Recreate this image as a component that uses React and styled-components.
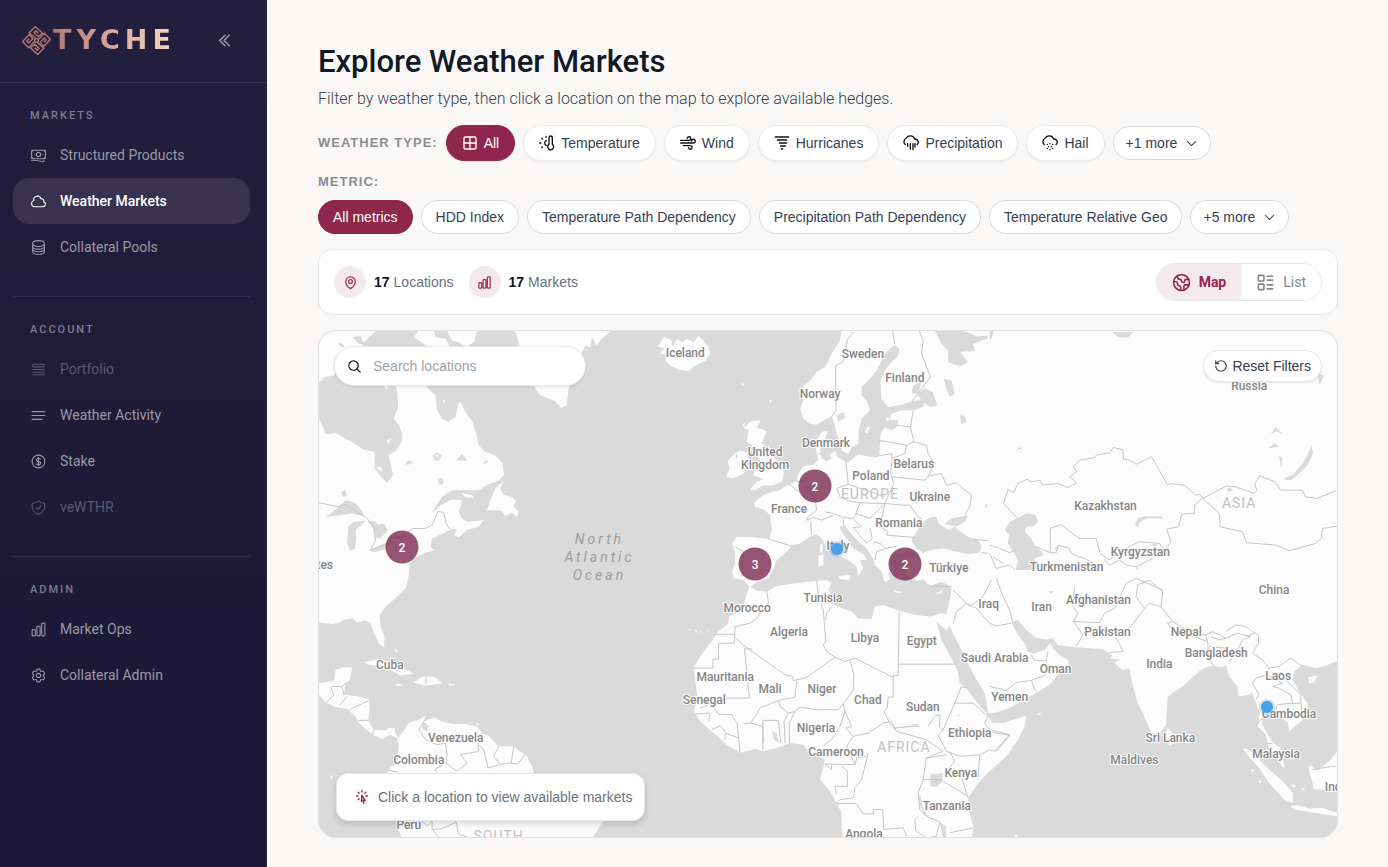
import { useState } from "react"
import styled, { createGlobalStyle, css } from "styled-components"
import {
    HiOutlineBanknotes,
    HiOutlineChartBar,
    HiOutlineChevronDoubleLeft,
    HiOutlineChevronDown,
    HiOutlineCircleStack,
    HiOutlineCloud,
    HiOutlineCog6Tooth,
    HiOutlineCurrencyDollar,
    HiOutlineCursorArrowRays,
    HiOutlineMagnifyingGlass,
    HiOutlineMapPin,
    HiOutlineQueueList,
    HiOutlineShieldCheck,
} from "react-icons/hi2"
import { Earth, Grid2x2, LayoutList, RotateCcw } from "lucide-react"

const GlobalStyle = createGlobalStyle`
    *{
        box-sizing: border-box;
    }

    body{
        margin: 0;
        background-color: #f9f8f7;
        font-family: "Liberation Sans", Arial, sans-serif;
        color: #111827;
    }

    button, input{
        font: inherit;
        color: inherit;
    }

    button{
        cursor: pointer;
    }
`

const Page = styled.div`
    display: flex;
    min-height: 100vh;
`

/* Sidebar */

const Sidebar = styled.aside`
    flex: 0 0 267px;
    background: linear-gradient(180deg, #241e3f 0%, #1f1a38 50%, #1c1637 100%);
    border-right: 1px solid #2b2549;
    font-family: Roboto, sans-serif;
`

const Brand = styled.div`
    display: flex;
    align-items: center;
    justify-content: space-between;
    height: 83px;
    padding: 0 33px 2px 22px;
    border-bottom: 1px solid #332d4f;
`

const Logo = styled.a`
    display: flex;
    align-items: center;
    gap: 2px;
    text-decoration: none;
    font-family: "DejaVu Sans", sans-serif;
    font-size: 27px;
    font-weight: 700;
    line-height: 32px;
    letter-spacing: 5px;

    span{
        color: transparent;
        background: linear-gradient(90deg, #b07a74, #dba99c 50%, #f7d9bd);
        background-clip: text;
    }
`

const CollapseButton = styled.button`
    display: flex;
    padding: 0;
    border: 0;
    background: none;
    color: #a3a1b3;
    font-size: 17px;

    svg{
        stroke-width: 2;
    }
`

const Section = styled.section`
    margin: 0 16px 0 13px;
    padding: 25px 0 26px;

    & + &{
        border-top: 1px solid #332d4d;
    }
`

const SectionTitle = styled.h2`
    margin: 0 0 8px 17px;
    font-size: 11px;
    line-height: 16px;
    font-weight: 500;
    letter-spacing: 2px;
    text-transform: uppercase;
    color: #7f7b91;
`

const NavItem = styled.a`
    display: flex;
    align-items: center;
    gap: 13px;
    height: 46px;
    padding: 0 17px;
    border-radius: 16px;
    font-size: 14px;
    text-decoration: none;
    color: #9a98a6;

    svg{
        width: 17px;
        height: 17px;
    }

    ${({ $muted }) => $muted && css`
        color: #5c586f;
    `}

    ${({ $active }) => $active && css`
        color: #fff;
        font-weight: 500;
        background-color: #39324f;
    `}
`

/* Filters */

const Main = styled.main`
    flex: 1;
    min-width: 0;
    padding: 41px 50px 28px 51px;
`

const Title = styled.h1`
    margin: 0;
    font-family: Roboto, sans-serif;
    font-size: 31px;
    line-height: 42px;
    font-weight: 500;
`

const Subtitle = styled.p`
    margin: 4px 0 14px;
    font-family: Roboto, sans-serif;
    font-size: 16px;
    line-height: 24px;
    font-weight: 300;
    color: #374151;
`

const FilterRow = styled.div`
    display: flex;
    flex-wrap: wrap;
    align-items: center;
    gap: 8px;
`

const FilterLabel = styled.span`
    font-size: 13px;
    line-height: 18px;
    font-weight: 700;
    letter-spacing: 1px;
    color: #8b8d94;
`

const MetricLabel = styled(FilterLabel)`
    display: block;
    margin: 12px 0 9px;
`

const Pill = styled.button`
    display: flex;
    align-items: center;
    gap: 6px;
    height: ${({ $tall }) => ($tall ? 36 : 34)}px;
    padding: 0 ${({ $tall, $more }) => ($tall ? 15 : $more ? 12 : 14)}px;
    border: 1px solid ${({ $tall }) => ($tall ? "#e9eaee" : "#d7dae0")};
    border-radius: 18px;
    background-color: #fff;
    box-shadow: ${({ $tall }) => ($tall ? "0 1px 2px rgba(0, 0, 0, 0.06)" : "none")};
    font-size: 14px;
    white-space: nowrap;
    color: #374151;

    svg{
        width: 16px;
        height: 16px;
        color: #111;
    }

    ${({ $more }) => $more && css`
        gap: 8px;

        svg{
            width: 13px;
            height: 13px;
            stroke-width: 2;
            color: #374151;
        }
    `}

    ${({ $selected }) => $selected && css`
        border-color: #8f264b;
        background-color: #8f264b;
        color: #fff;

        svg{
            color: #fff;
        }
    `}
`

/* Stats */

const StatsCard = styled.div`
    display: flex;
    align-items: center;
    justify-content: space-between;
    margin: 15px 0;
    padding: 13px 15px;
    border: 1px solid #e5e7eb;
    border-radius: 14px;
    background-color: #fff;
`

const Stats = styled.div`
    display: flex;
    gap: 15px;
`

const Stat = styled.div`
    display: flex;
    align-items: center;
    gap: 4px;
    font-size: 14px;
    color: #6b7280;

    strong{
        color: #111827;
    }
`

const StatIcon = styled.span`
    display: grid;
    place-items: center;
    width: 32px;
    height: 32px;
    margin-right: 4px;
    border-radius: 50%;
    background-color: #f4e9ed;
    color: #9b2f55;
    font-size: 15px;

    svg{
        stroke-width: 2;
    }
`

const Toggle = styled.div`
    display: flex;
    overflow: hidden;
    border: 1px solid #e5e7eb;
    border-radius: 19px;
    font-family: Roboto, sans-serif;
`

const ToggleButton = styled.button`
    display: flex;
    align-items: center;
    gap: 8px;
    height: 36px;
    padding: 0 15px;
    border: 0;
    font-size: 14px;
    font-weight: ${({ $on }) => ($on ? 700 : 400)};
    color: ${({ $on }) => ($on ? "#96264f" : "#85868d")};
    background-color: ${({ $on }) => ($on ? "#f4e9ed" : "#fff")};
`

/* Map */

const MapCard = styled.div`
    position: relative;
    overflow: hidden;
    aspect-ratio: 1020 / 508;
    border: 1px solid #e1e2e6;
    border-radius: 18px;
    background-color: #dadada;
`

const MapSvg = styled.svg`
    display: block;
    width: 100%;
    height: 100%;

    .land{
        fill: #fcfcfc;
    }

    .water{
        fill: #dadada;
    }

    .border{
        fill: none;
        stroke: #c6c6c6;
        stroke-width: 3;
        stroke-linejoin: round;
    }
`

const CountryName = styled.text`
    font-family: Roboto, sans-serif;
    font-size: 12px;
    font-weight: 500;
    text-anchor: middle;
    fill: #868686;
    stroke: #fcfcfc;
    stroke-width: 2px;
    paint-order: stroke;
`

const ContinentName = styled.text`
    font-family: Roboto, sans-serif;
    font-size: 14px;
    letter-spacing: 1px;
    text-anchor: middle;
    fill: #c2c2c2;
`

const OceanName = styled.text`
    font-family: Roboto, sans-serif;
    font-size: 14px;
    font-style: italic;
    letter-spacing: 3px;
    text-anchor: middle;
    fill: #9c9c9c;
`

const Cluster = styled.button`
    position: absolute;
    width: 33px;
    height: 33px;
    padding: 0;
    border: 0;
    border-radius: 50%;
    transform: translate(-50%, -50%);
    background-color: rgba(128, 50, 86, 0.83);
    font-family: Roboto, sans-serif;
    font-size: 12px;
    font-weight: 500;
    color: #fff;
`

const Pin = styled.button`
    position: absolute;
    width: 12px;
    height: 12px;
    padding: 0;
    border: 0;
    border-radius: 50%;
    transform: translate(-50%, -50%);
    background-color: #46a2e4;
    box-shadow: 0 0 0 2px rgba(70, 162, 228, 0.3);
`

const Search = styled.label`
    position: absolute;
    top: 15px;
    left: 15px;
    display: flex;
    align-items: center;
    gap: 11px;
    width: 252px;
    height: 40px;
    padding: 0 12px;
    border: 1px solid #e5e7eb;
    border-radius: 20px;
    background-color: #fff;
    box-shadow: 0 1px 3px rgba(0, 0, 0, 0.1);

    svg{
        flex: none;
        width: 15px;
        height: 15px;
        stroke-width: 2;
        color: #111;
    }

    input{
        flex: 1;
        min-width: 0;
        padding: 0;
        border: 0;
        outline: 0;
        font-size: 14px;
        background: none;
    }

    input::placeholder{
        color: #9ca3af;
    }
`

const ResetButton = styled.button`
    position: absolute;
    top: 19px;
    right: 15px;
    display: flex;
    align-items: center;
    gap: 4px;
    height: 32px;
    padding: 0 10px;
    border: 1px solid #e5e7eb;
    border-radius: 16px;
    background-color: #fff;
    box-shadow: 0 1px 2px rgba(0, 0, 0, 0.08);
    font-size: 14px;
    color: #374151;
`

const Hint = styled.div`
    position: absolute;
    left: 17px;
    bottom: 16px;
    display: flex;
    align-items: center;
    gap: 8px;
    height: 48px;
    padding: 0 12px 0 17px;
    border: 1px solid #e9e9ec;
    border-radius: 12px;
    background-color: #fefefe;
    box-shadow: 0 3px 6px rgba(0, 0, 0, 0.14);
    font-size: 14px;
    color: #6b7280;

    svg{
        width: 16px;
        height: 16px;
        stroke-width: 2;
        color: #96264f;
    }
`

/* Icons */

const LogoMark = () => (
    <svg width="29" height="29" viewBox="0 0 48 48" fill="none" stroke="#b5786f" strokeWidth="2.3" aria-hidden="true">
        {[0, 90, 180, 270].map((angle) => (
            <path
                key={angle}
                transform={`rotate(${angle} 24 24)`}
                d="M27 21L23 21L12 11L22 1L34 12L27 18L20 11L23 8L27 12"
            />
        ))}
    </svg>
)

const StrokeIcon = ({ children, width = 2 }) => (
    <svg
        viewBox="0 0 24 24"
        fill="none"
        stroke="currentColor"
        strokeWidth={width}
        strokeLinecap="round"
        strokeLinejoin="round"
        aria-hidden="true"
    >
        {children}
    </svg>
)

const ActivityIcon = () => (
    <StrokeIcon width={1.5}>
        <path d="M3 6.5h18M3 12h18M3 17.5h14" />
    </StrokeIcon>
)

const TemperatureIcon = () => (
    <StrokeIcon>
        <path d="M15 14V4a2.5 2.5 0 0 1 5 0v10a4.5 4.5 0 1 1-5 0z" />
        <path d="M11 8.3a4 4 0 0 0 0 7.4M1 12h2M4 5l1.2 1.2M4 19l1.2-1.2M10.5 2v1.5" />
    </StrokeIcon>
)

const WindIcon = () => (
    <StrokeIcon>
        <path d="M1 8h12.5a2.7 2.7 0 1 0-2.7-2.7M1 12h19a2.8 2.8 0 1 0-2.8-2.8M5 16h10.5a2.7 2.7 0 1 1-2.7 2.7" />
    </StrokeIcon>
)

const HurricaneIcon = () => (
    <StrokeIcon>
        <path d="M2 3h20M5 7.5h14M8 12h11M10 16.5h7M11 21h2" />
    </StrokeIcon>
)

const RainIcon = () => (
    <StrokeIcon>
        <path d="M3.5 14.5A6 6 0 0 1 5 4.5a7 7 0 0 1 12.5 1.5A4.8 4.8 0 0 1 21 14.5" />
        <path d="M7 13v4M11 13v8M15 13v9M18 13v5" />
    </StrokeIcon>
)

const HailIcon = () => (
    <StrokeIcon>
        <path d="M3.5 14.5A6 6 0 0 1 5 4.5a7 7 0 0 1 12.5 1.5A4.8 4.8 0 0 1 21 14.5" />
        <path d="M8 14v.1M12 13v.1M16 14v.1M10 17.5v.1M14 17.5v.1M8 20v.1M16 20v.1M12 22v.1" />
    </StrokeIcon>
)

const navigation = [
    {
        title: "Markets",
        items: [
            { name: "Structured Products", icon: HiOutlineBanknotes },
            { name: "Weather Markets", icon: HiOutlineCloud, active: true },
            { name: "Collateral Pools", icon: HiOutlineCircleStack },
        ],
    },
    {
        title: "Account",
        items: [
            { name: "Portfolio", icon: HiOutlineQueueList, muted: true },
            { name: "Weather Activity", icon: ActivityIcon },
            { name: "Stake", icon: HiOutlineCurrencyDollar },
            { name: "veWTHR", icon: HiOutlineShieldCheck, muted: true },
        ],
    },
    {
        title: "Admin",
        items: [
            { name: "Market Ops", icon: HiOutlineChartBar },
            { name: "Collateral Admin", icon: HiOutlineCog6Tooth },
        ],
    },
]

const weatherTypes = [
    { name: "All", icon: Grid2x2 },
    { name: "Temperature", icon: TemperatureIcon },
    { name: "Wind", icon: WindIcon },
    { name: "Hurricanes", icon: HurricaneIcon },
    { name: "Precipitation", icon: RainIcon },
    { name: "Hail", icon: HailIcon },
]

const metrics = [
    "All metrics",
    "HDD Index",
    "Temperature Path Dependency",
    "Precipitation Path Dependency",
    "Temperature Relative Geo",
]

const countries = [
    ["Iceland", 367, 27],
    ["Sweden", 545, 28],
    ["Finland", 587, 52],
    ["Norway", 502, 68],
    ["Denmark", 508, 117],
    ["United", 447, 126],
    ["Kingdom", 447, 139],
    ["Poland", 553, 150],
    ["Belarus", 596, 138],
    ["Ukraine", 612, 171],
    ["France", 471, 183],
    ["Romania", 581, 197],
    ["Italy", 520, 220],
    ["Türkiye", 631, 242],
    ["Russia", 932, 60],
    ["Kazakhstan", 788, 180],
    ["Kyrgyzstan", 823, 226],
    ["Turkmenistan", 749, 241],
    ["China", 957, 264],
    ["Afghanistan", 781, 274],
    ["Iran", 724, 281],
    ["Iraq", 671, 278],
    ["Pakistan", 790, 306],
    ["Nepal", 869, 306],
    ["Bangladesh", 899, 327],
    ["India", 842, 338],
    ["Oman", 738, 343],
    ["Saudi Arabia", 677, 332],
    ["Yemen", 692, 371],
    ["Laos", 961, 350],
    ["Cambodia", 972, 388],
    ["Malaysia", 959, 428],
    ["Sri Lanka", 853, 412],
    ["Maldives", 817, 434],
    ["Indonesia", 1034, 461],
    ["Tunisia", 505, 272],
    ["Morocco", 429, 282],
    ["Algeria", 471, 306],
    ["Libya", 547, 312],
    ["Egypt", 604, 315],
    ["Mauritania", 407, 351],
    ["Mali", 452, 363],
    ["Niger", 504, 363],
    ["Chad", 550, 374],
    ["Sudan", 605, 381],
    ["Senegal", 386, 374],
    ["Nigeria", 498, 402],
    ["Ethiopia", 652, 407],
    ["Cameroon", 518, 426],
    ["Kenya", 643, 447],
    ["Tanzania", 629, 480],
    ["Angola", 546, 509],
    ["Cuba", 71, 339],
    ["Venezuela", 137, 412],
    ["Colombia", 100, 434],
    ["Peru", 90, 499],
    ["United States", -22, 239],
]

const clusters = [
    { count: 2, x: 83, y: 217 },
    { count: 2, x: 497, y: 156 },
    { count: 3, x: 437, y: 234 },
    { count: 2, x: 587, y: 234 },
]

const pins = [
    { name: "Rome", x: 519, y: 219 },
    { name: "Bangkok", x: 950, y: 377 },
]

const at = ({ x, y }) => ({ left: `${(x / 1020) * 100}%`, top: `${(y / 508) * 100}%` })

function WorldMap(){
    return(
        <MapSvg viewBox="0 0 1020 508" preserveAspectRatio="xMidYMid slice" role="img" aria-label="World map">
            <g transform="scale(0.33333)">
                {/* Canada and the United States */}
                <g>
                    <path className="land" d="M0 0H172L130 40 200 170 232 165H318L350 195 355 240 370 265 388 275 410 260 420 215 427 217 440 245 462 275 475 320 480 345 500 365 530 375 552 400 556 435 540 452 510 462 480 480 400 480 370 500 350 530 340 550 365 525 400 508 430 510 425 530 420 545 430 565 445 575 480 572 495 570 480 590 445 600 420 622 406 615 415 597 400 596 370 612 340 625 335 650 346 660 320 668 290 682 272 700 270 735 262 770 260 775 230 805 200 830 182 855 185 890 197 920 195 953 180 940 165 910 155 880 140 872 115 878 100 865 80 868 60 878 40 882 0 878Z" />
                    <path className="land" d="M285 20L300 0H345L350 20 380 25 395 50 330 50ZM385 0H475L465 35 440 50 420 35 400 30ZM590 0L600 35 650 175 665 195 710 212 728 233 745 225 750 175 790 70 800 45 815 50 820 20 835 45 850 25 878 0Z" />
                    <path className="land" d="M555 450L545 475 553 492 580 500 592 512 585 530 600 545 595 560 580 548 560 558 545 540 505 540 515 510 530 475ZM1020 45L1040 20 1060 30V75L1025 70 1040 55Z" />
                    <path className="water" d="M0 155L20 140 45 135 60 100H200L230 160 235 185 238 230 225 265 240 285 250 310 248 335 230 362 208 375 215 400 222 435 205 458 190 445 168 415 167 365 130 356 100 336 70 320 50 308 20 312 12 290 0 265Z" />
                    <path className="land" d="M197 165H210L203 180ZM203 332L215 325 210 342ZM170 412L188 410 190 425ZM370 210H378V220Z" />
                    <path className="water" d="M22 560L45 542 80 510 108 518 132 545 135 560 100 550 60 556ZM88 590L105 575 140 572 110 600 112 625 108 655 95 662 85 640ZM145 572L170 575 178 585 195 580 207 600 185 625 170 622 160 590ZM150 662L180 648 220 632 205 655 165 667ZM212 625L235 612 262 616 245 628ZM68 485L80 480 84 498 70 500Z" />
                    <path className="water" d="M342 378L352 365 368 375 362 390 348 392ZM258 402L268 390 285 395 270 403ZM412 390L430 372 445 392ZM493 402L500 390 512 394ZM358 448L370 443 376 455 368 465 360 460Z" />
                    <path className="land" d="M348 376L358 372 360 385ZM428 488L460 495 468 503 440 502ZM460 580L485 572 480 582Z" />
                    <path className="border" d="M0 518L60 530 80 523 145 565 165 595 170 630 155 660 205 640 220 622 250 620 280 595H320L340 585 358 543 375 547 382 580 393 597" />
                    <path className="water" d="M55 38L70 52 78 48 66 38ZM100 20L125 15 130 30 145 45 120 40Z" />
                </g>
                {/* Caribbean, Central and South America */}
                <g transform="translate(0 750)">
                    <path className="land" d="M0 310L45 303 50 270 75 262 100 264 92 300 80 310 75 345 110 349 150 358 152 385 148 422 165 450 200 452 210 443 235 448 245 465 270 430 300 420 328 404 315 425 345 413 370 425 400 433 440 433 475 440 490 460 510 470 540 500H585L625 530 642 565 650 590 800 640 886 690 850 730 820 780H250L228 722 200 650 215 600 205 575 235 545 240 500 235 475 215 465 190 478 160 465 120 430 110 410 85 388 50 382 20 368 0 345Z" />
                    <path className="water" d="M236 440L226 452 238 475 246 462 235 448ZM315 425L310 445 322 455 330 440Z" />
                    <path className="land" d="M135 248L180 237 230 253 285 282 245 286 200 262 150 255ZM285 308L310 290 345 290 372 310 320 318ZM227 315L240 312 255 317 235 319ZM390 312H408V317H390ZM228 205L238 220 230 218ZM472 428L480 432 476 440ZM32 585L42 592 38 600Z" />
                    <path className="border" d="M35 322L45 345 22 368M38 320H68L75 345M80 310L68 322M60 378L85 350M92 390L150 362M120 422H148M160 465L165 450M328 404L300 450 320 480 355 495 380 490 385 525 382 550 348 570 355 577M382 550L415 575 445 550 425 525 480 515 478 495 495 510 508 565 545 555 570 550M490 460L478 495M540 500L525 530 545 555M585 500L578 550M618 525L598 553 570 550M303 715L325 740 340 725V748L360 775M340 750L368 748 412 728 420 765 448 773M206 572L235 577M322 290V315" />
                </g>
                {/* Europe */}
                <g transform="translate(966 0)">
                    <path className="land" d="M605 0L600 30 580 60 565 90 555 110 530 125 510 150 490 165 482 190 490 210 480 235 490 265 510 280 530 283 560 265 575 257 585 285 590 310 600 335 605 360 625 372 635 350 655 342 657 300 665 265 690 240 680 210 665 195V170L690 145 710 120 725 90 740 65 765 42 778 55 775 75 755 95 735 120 722 150 724 205 745 230 780 225 820 212 855 205 850 230 820 240H785L755 250 750 268 775 270 770 290 755 300 735 290 722 310 718 375 690 380 655 372 625 397 605 388 590 378 560 392 545 385 540 350 555 330 562 302 545 305 530 330 528 360 535 388 520 403 490 408 475 430 470 455 445 462 420 480 395 485 370 495 342 517 345 530 375 540 390 555 395 600 388 627 340 622 290 620 275 640 285 665 285 700 275 725 280 745 310 750 330 772 350 755 385 745 400 715 410 690 440 665 457 645 480 640 510 620 530 612 545 625 560 650 590 675 625 690 650 710 655 738 670 715 660 690 682 690 670 672 640 655 620 625 605 605 598 590 615 585 628 605 650 628 680 655 700 685 705 705 725 725 735 757 750 748 745 725 770 735 755 705 748 688 770 670 800 668 790 685 795 715 805 740 830 752 850 748 870 768 905 755 935 770V790H1065V0Z" />
                    <path className="land" d="M53 48L72 18 85 40 100 46 110 25 125 35 140 25 160 35 175 15 190 30 205 50 210 70 195 90 165 105 145 122 115 118 90 105 75 90 85 75 60 65 75 55Z" />
                    <path className="land" d="M340 272L362 270 350 292 380 302 372 322 365 340 385 360 400 382 420 400 432 425 425 455 400 466 370 465 345 480 330 478 350 455 370 447 340 435 345 415 368 405 352 375 345 350 320 335 325 300 310 292 330 275ZM285 368L300 360 325 368 325 390 310 430 280 445 258 440 268 415 262 392ZM303 160L310 158 310 167ZM388 210L396 208 390 222ZM306 282L315 278 312 290ZM568 372L588 362 590 380 575 385ZM535 678L550 672 550 705 535 712ZM540 645L548 640 548 665 540 668ZM597 738L632 734 628 752 600 747ZM680 292L690 288 682 310 675 305ZM738 263L752 262 740 275Z" />
                    <path className="water" d="M830 655L815 630 830 605 845 580 870 562 890 560 897 580 925 600 945 590 955 600 985 620 1015 630 1026 650 1018 668 985 672 950 665 915 655 880 658 850 668ZM915 582L935 565 985 555 975 575 950 590ZM590 255L612 245 615 262 595 275ZM830 190L855 175 880 185 892 225 870 230 845 210ZM912 145L935 150 945 190 930 200 920 175ZM960 255L975 258 982 275 965 280ZM800 665L835 672 828 682 795 680ZM820 165L845 155 835 190 815 188Z" />
                    <path className="water" d="M885 0L905 40 925 60 925 95 960 108 985 95 962 65 1005 62 1000 40 1050 22V15L1010 18 985 5 960 0ZM1035 525L1045 518 1040 535Z" />
                    <path className="border" d="M622 28L640 5M622 28L610 95 587 105 588 240 575 260M758 0L765 42M838 0L850 30 845 70 872 140 815 215M820 240L812 290 770 285M812 290L822 335 800 345 718 330M822 335L860 345 865 370 885 400 865 438 855 450 757 440M800 345L795 370 757 385 755 370 700 380M757 385L752 430 762 460 735 520M865 438L905 430 920 465 950 458 995 495 990 530 975 555M618 392L625 462 590 475 600 500 625 512 660 518 735 520M625 462L735 500M660 518L648 550 690 565 735 520M735 520L790 525 810 525 835 560 845 565M735 520L720 590 745 605 740 615 825 622M648 550L640 565 610 562 580 550 555 545M505 560L530 540 525 505 498 470M505 560L500 570 520 562 545 570 580 555M512 575L515 615M445 460L470 480 498 500M470 455L500 450M610 565V585M640 568L665 590 640 592 680 640 697 625 690 595M700 635L720 640 738 655 710 665 705 690M738 655L770 648M385 627L455 648M285 650L310 665 305 740M288 372L290 385M535 370L550 372M1000 628L1050 632M1025 668L1050 670M870 768L935 770" />
                </g>
                {/* Africa */}
                <g transform="translate(1026 750)">
                    <path className="land" d="M268 18L290 32 320 35 345 20 370 15 440 5 500 0 515 10 505 30 522 55 515 70 545 85 575 95 595 115 635 118 645 80 670 75 715 92 770 105 810 110 845 100 865 105 870 135 860 152 830 125 845 180 875 235 895 275 900 310 920 325 950 365 980 400 985 410 1000 430 1030 430 1100 408 1095 440 1075 480 1040 530 990 575 960 605 925 655 930 700 942 745 935 780H550L545 740V700L530 670 510 635 480 600 490 565 495 540 470 527 450 522 430 495 390 490 350 505 310 515 285 507 240 520 200 495 160 460 120 425 100 395 112 360 110 340 100 265 120 230 150 190 170 160 205 130 207 110 245 90Z" />
                    <path className="water" d="M812 585L848 580V605L830 622 812 620ZM780 640L788 680 803 710 795 708 778 670ZM840 728L858 740 860 778H850ZM335 455L350 460 356 490 342 480ZM892 405L900 405 896 412Z" />
                    <path className="land" d="M695 30L730 37 740 33 715 40ZM825 40L850 30 845 42ZM103 152L110 150V158ZM118 155L124 152V160ZM85 148H90V154ZM142 150L146 148V154Z" />
                    <path className="border" d="M320 35L325 70 300 90 295 110 270 130 225 140 222 190H175V238H158V265H100M222 170L255 200 375 285 398 290 400 302 437 295 525 232M160 163H220M275 207H253L268 355H200M470 0L475 50 490 90 497 185 490 195 500 215 525 232 555 245 585 235 700 293V287H715L718 95M718 253H885M497 120L500 100 515 80M570 240L582 285 580 330 550 372 535 390H470L420 382 405 395M410 302L405 352 355 362 300 385 285 410 270 430M355 362L360 380 385 400 405 395M385 400L372 425 375 490M405 395L388 430V490M310 490L308 422H355L362 490M250 432L270 430 308 440V510M240 520L235 475 195 460M235 475L232 435 215 405 175 403 150 372 120 385M105 403L150 400 145 425M155 450L180 438 195 455 195 480M550 372L555 395 575 440 558 445 580 470 560 500 570 520 585 555 495 553M555 395L540 440 515 480 488 500M580 470L625 460 670 430 695 425 710 455 800 480 850 515 800 535M700 290V352H685L682 385 672 395 690 430 705 450M705 445L755 440H780M755 435H775M805 440L825 408 840 405V440L850 450 885 370 905 320 920 325M885 370L940 370 985 410M850 450L835 465 860 515 900 530 960 525 990 510M985 410L975 430 990 450 1050 465 1005 515 990 510M960 525L955 600M870 515L885 545 860 575 905 590 925 655M850 605L925 650M790 600H848M800 535L790 600 775 640 780 690 800 710M800 535L860 525M620 530L590 535 585 555M625 520L605 600 585 625 580 655 540 660 530 670M495 553L515 570V555M545 560L562 575V620H525L530 645M530 672H590L610 703H640V690H668L672 750 730 745 740 770M775 710L765 720 768 755 800 775 830 770 840 728 800 710M870 760L940 745" />
                </g>
                {/* Russia, Kazakhstan, Mongolia and China */}
                <g transform="translate(2016 0)">
                    <path className="land" d="M-6 0H1060V790H-6Z" />
                    <path className="water" d="M88 562L110 550 138 554 145 575 135 588 110 590 105 605 125 625 135 645 150 658 162 675 135 685 150 710 152 752 130 758 100 745 78 725 85 690 75 670 55 640 58 615 45 600 60 575ZM370 5L385 20 415 22 432 5ZM0 0H12L5 25 0 28ZM967 345L972 370 955 405 935 425 905 450 883 447 915 430 940 400 955 375ZM437 585L445 565 465 558 520 558 520 565 470 565 450 578 447 592ZM712 475L722 472 730 480 718 487ZM480 645L505 640 500 648ZM195 655L207 650 205 662ZM820 750L832 747 838 757ZM75 370L85 358 102 353 85 352ZM845 310L860 290 880 310 862 303ZM835 355L855 340 872 350 860 350ZM870 375L880 385 876 412ZM985 130L1005 135 992 165Z" />
                    <path className="border" d="M85 565L65 545 42 520 55 478 72 487 85 460 112 447 125 455 150 450 160 465 205 460 235 472 262 458 240 440 262 425 252 410 270 390 315 382 320 375 362 367 372 352 400 358 403 387 420 390 440 402 487 380 535 465 545 460 585 465 620 495 632 492 640 505 712 467 740 470 795 490 803 480 797 460 812 437 858 455 875 480 940 480 950 500 985 505 1040 482M640 505L617 522 615 550 577 552 568 590 532 597 545 635 535 650 525 660M640 505L690 550 693 590 760 605 772 638 860 645 900 662 980 640 997 625 1000 595 1045 588M525 660L510 640 450 635 415 652 370 680 360 690 332 670 320 625 268 625 215 583 182 595V668L140 650M182 668H200L205 645 240 655 245 670 290 688 330 710 345 745M170 730L210 733 255 757 260 780M280 780L330 745 375 748 400 725 410 780M345 690L360 705 390 690 410 705 440 710 490 685M440 710L455 745 410 755M0 645L30 655 60 668 78 660M0 670L20 715 60 705 78 720M10 680L40 700M0 735L25 765" />
                </g>
                {/* Middle East and South Asia */}
                <g transform="translate(2016 750)">
                    <path className="land" d="M-110 5L-120 60 -130 100 -122 135 -90 200 -65 250 -40 300 -15 340 -5 400 20 398 60 385 130 345 180 315 205 285 240 260 235 240 210 225 190 205 182 190 165 210 130 222 115 215 105 190 85 165 65 125 85 120 110 150 140 175 175 178 190 175 205 195 260 202 340 208 370 228 362 235 392 240 375 248 400 272 420 265 428 310 445 370 465 410 485 460 510 462 530 435 535 350 580 320 635 270 665 258 700 262 710 255 720 290 745 320 748 350 780 345 787 335 800 370 812 400 805 440 830 465 838 500 860 530 880 562 887 562 875 505 852 490 830 455 817 430 820 410 850 402 880 415 897 430 900 455 930 430 957 405 955 370 930 335 910 300 915 275 940 255 980 265 1010 258 1040 245H1060V-30H-110Z" />
                    <path className="land" d="M535 442L552 465 558 490 540 497 530 475ZM957 292L985 287 975 308 960 312ZM758 503L785 515 830 560 880 605 912 640 912 670 885 660 840 610 810 565 780 532ZM905 680L925 677 960 687 1000 685 1045 700V710L980 700 915 690ZM957 562L968 557 985 573 1020 545 1045 515H1065V635L975 628 965 590ZM785 568L795 572 790 578ZM808 600L818 605 812 612ZM905 612L920 618 915 628ZM938 625H946V632H938ZM75 768L82 765 88 775H75ZM145 400L155 401V404H145Z" />
                    <path className="border" d="M0 130L20 138 65 130M20 -5L40 50 60 90 68 122M-110 130L-100 95 -70 70 -40 85 0 130M-110 30L-60 80 -20 50 5 0M125 225L135 242 170 243 175 215M0 320L50 332 80 308 125 302 170 285M125 302L138 335M260 200L280 165 252 125 265 100 250 80 255 20M252 125L330 128 345 100 375 85 410 10 440 -5 520 30M375 165L402 215 360 218M410 160L465 85 440 50 445 15 480 0 520 35 515 80 480 70 465 85M515 80L550 125 600 155 650 165 655 185 545 145 535 130 550 125M655 185L660 240 675 260M650 165L670 155 710 175 690 180 665 170M710 175L745 160 785 170 760 180 750 200 720 245M660 200L710 205M710 155L740 135 770 140 790 155 808 165V190L790 220 820 240 840 265 870 260 905 235 940 260M795 160L770 170M840 265L835 285 800 295 790 310 810 345 800 360M835 285L880 310 850 320 870 325 905 345 910 370 865 375 860 390M880 290L935 345 938 410M905 372L935 370M970 570L1020 562 1040 560M800 440L825 405M830 490L850 492M-6 455L60 468 20 515" />
                    <path className="water" d="M175 35L190 32 188 42Z" />
                </g>
            </g>

            <ContinentName x="552" y="169">EUROPE</ContinentName>
            <ContinentName x="586" y="422">AFRICA</ContinentName>
            <ContinentName x="922" y="178">ASIA</ContinentName>
            <ContinentName x="180" y="512">SOUTH</ContinentName>
            <OceanName x="281" y="214">North</OceanName>
            <OceanName x="281" y="232">Atlantic</OceanName>
            <OceanName x="281" y="250">Ocean</OceanName>
            {countries.map(([name, x, y]) => (
                <CountryName key={name} x={x} y={y}>{name}</CountryName>
            ))}
        </MapSvg>
    )
}

export default function App(){
    const [weatherType, setWeatherType] = useState("All")
    const [metric, setMetric] = useState("All metrics")
    const [view, setView] = useState("Map")
    const [search, setSearch] = useState("")

    const resetFilters = () => {
        setWeatherType("All")
        setMetric("All metrics")
        setSearch("")
    }

    return(
        <Page>
            <GlobalStyle />
            <Sidebar>
                <Brand>
                    <Logo href="#">
                        <LogoMark />
                        <span>TYCHE</span>
                    </Logo>
                    <CollapseButton type="button" aria-label="Collapse sidebar">
                        <HiOutlineChevronDoubleLeft />
                    </CollapseButton>
                </Brand>
                <nav>
                    {navigation.map(({ title, items }) => (
                        <Section key={title}>
                            <SectionTitle>{title}</SectionTitle>
                            {items.map(({ name, icon: Icon, active, muted }) => (
                                <NavItem key={name} href="#" $active={active} $muted={muted}>
                                    <Icon />
                                    {name}
                                </NavItem>
                            ))}
                        </Section>
                    ))}
                </nav>
            </Sidebar>

            <Main>
                <Title>Explore Weather Markets</Title>
                <Subtitle>
                    Filter by weather type, then click a location on the map to explore available hedges.
                </Subtitle>

                <FilterRow>
                    <FilterLabel>WEATHER TYPE:</FilterLabel>
                    {weatherTypes.map(({ name, icon: Icon }) => (
                        <Pill
                            key={name}
                            type="button"
                            $tall
                            $selected={weatherType === name}
                            onClick={() => setWeatherType(name)}
                        >
                            <Icon />
                            {name}
                        </Pill>
                    ))}
                    <Pill type="button" $more>
                        +1 more <HiOutlineChevronDown />
                    </Pill>
                </FilterRow>

                <MetricLabel>METRIC:</MetricLabel>
                <FilterRow>
                    {metrics.map((name) => (
                        <Pill key={name} type="button" $selected={metric === name} onClick={() => setMetric(name)}>
                            {name}
                        </Pill>
                    ))}
                    <Pill type="button" $more>
                        +5 more <HiOutlineChevronDown />
                    </Pill>
                </FilterRow>

                <StatsCard>
                    <Stats>
                        <Stat>
                            <StatIcon><HiOutlineMapPin /></StatIcon>
                            <strong>17</strong> Locations
                        </Stat>
                        <Stat>
                            <StatIcon><HiOutlineChartBar /></StatIcon>
                            <strong>17</strong> Markets
                        </Stat>
                    </Stats>
                    <Toggle>
                        <ToggleButton type="button" $on={view === "Map"} onClick={() => setView("Map")}>
                            <Earth size={19} /> Map
                        </ToggleButton>
                        <ToggleButton type="button" $on={view === "List"} onClick={() => setView("List")}>
                            <LayoutList size={19} /> List
                        </ToggleButton>
                    </Toggle>
                </StatsCard>

                <MapCard>
                    <WorldMap />
                    {clusters.map((cluster) => (
                        <Cluster key={cluster.x} type="button" style={at(cluster)}>{cluster.count}</Cluster>
                    ))}
                    {pins.map((pin) => (
                        <Pin key={pin.name} type="button" aria-label={pin.name} style={at(pin)} />
                    ))}
                    <Search>
                        <HiOutlineMagnifyingGlass />
                        <input
                            type="text"
                            aria-label="Search locations"
                            placeholder="Search locations"
                            value={search}
                            onChange={(e) => setSearch(e.target.value)}
                        />
                    </Search>
                    <ResetButton type="button" onClick={resetFilters}>
                        <RotateCcw size={14} /> Reset Filters
                    </ResetButton>
                    <Hint>
                        <HiOutlineCursorArrowRays />
                        Click a location to view available markets
                    </Hint>
                </MapCard>
            </Main>
        </Page>
    )
}
